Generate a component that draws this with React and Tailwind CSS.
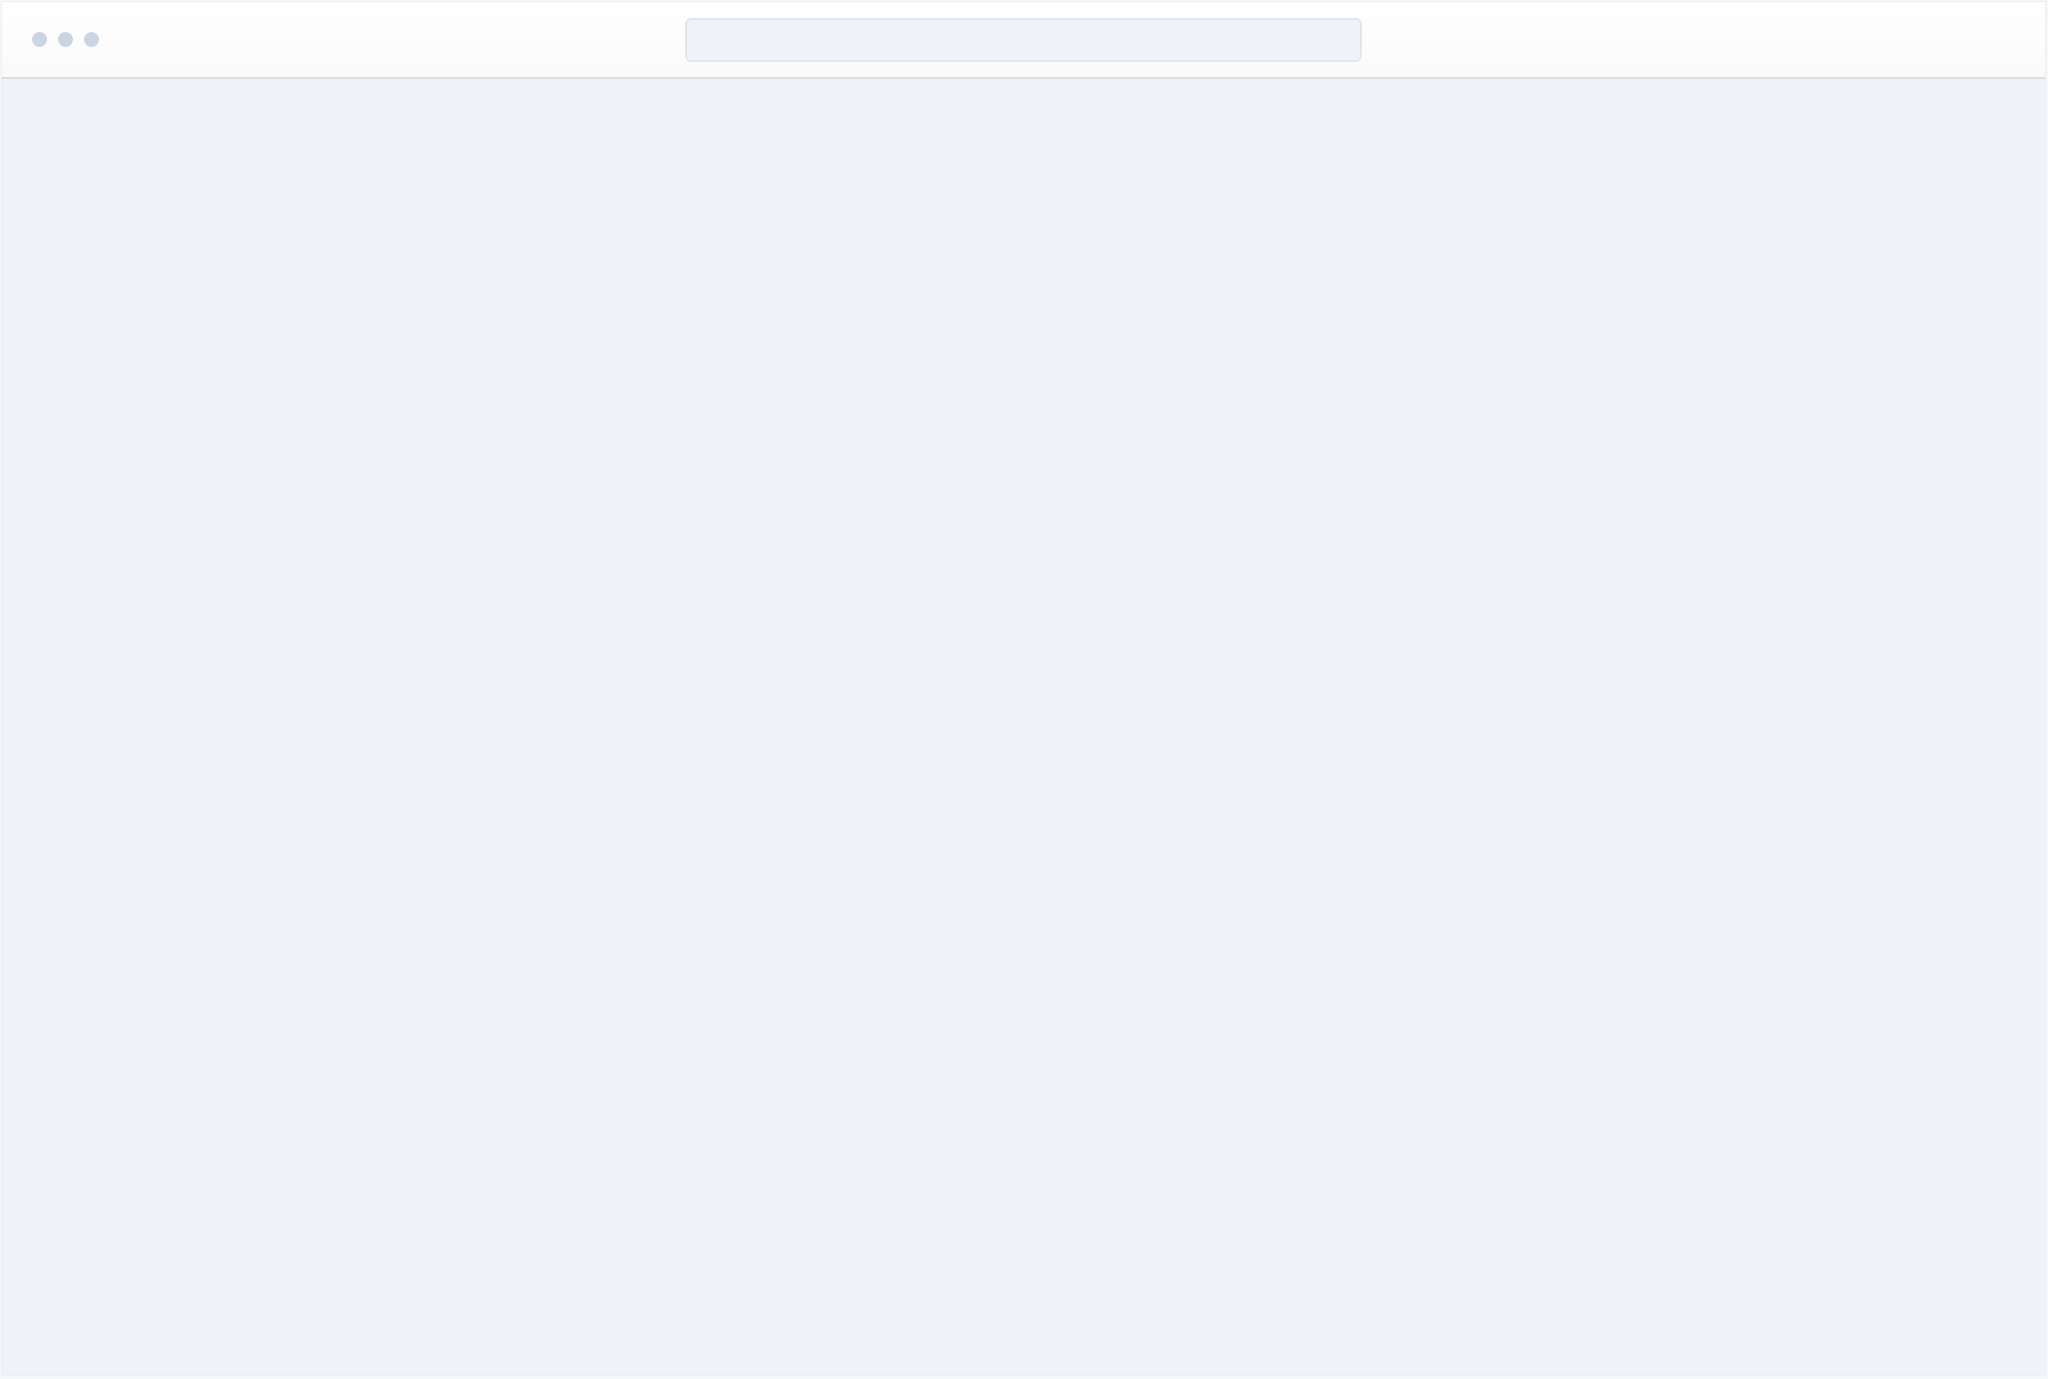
export default function App() {
  return (
    <div className="w-[2048px] h-[1379px] bg-[#f6f7f8] p-[1px] overflow-hidden" style={{ fontFamily: '"Liberation Sans", Arial, sans-serif' }}>
      <div className="w-[2045px] h-[1375px] flex flex-col border border-[#eceef1] rounded-[2px] overflow-hidden">
        <div className="h-[77px] shrink-0 grid grid-cols-[1fr_677px_1fr] items-center bg-gradient-to-b from-white to-[#fafafa] border-b-2 border-[#d9dde2]">
          <div className="flex items-center gap-[11px] pl-[30px]">
            <span className="w-[15px] h-[15px] rounded-full bg-[#cbd5e1]" />
            <span className="w-[15px] h-[15px] rounded-full bg-[#cbd5e1]" />
            <span className="w-[15px] h-[15px] rounded-full bg-[#cbd5e1]" />
          </div>
          <div className="h-[44px] rounded-[6px] bg-[#eff3f8] border-2 border-[#e1e6ed]" />
          <div />
        </div>
        <div className="flex-1 bg-[#eff3f8]" />
      </div>
    </div>
  );
}
